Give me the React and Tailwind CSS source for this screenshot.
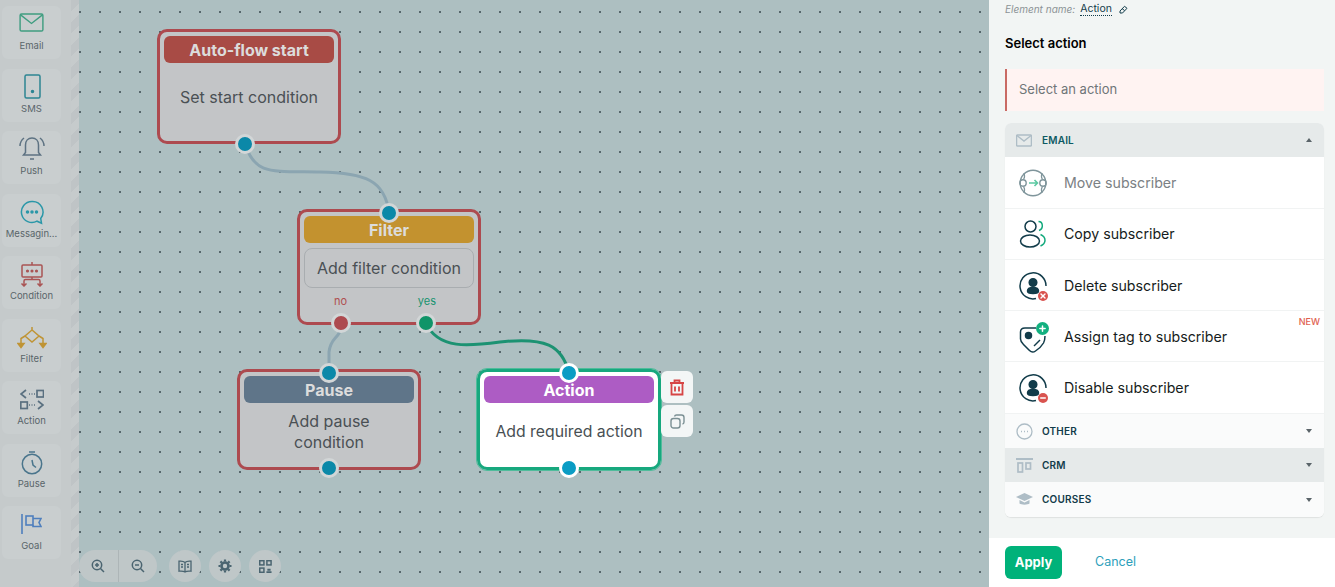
import React from "react";
import { Plus, Minus, X } from "lucide-react";

const FONT = "font-['Inter','Liberation_Sans',sans-serif]";

// Sidebar drawings, colours follow the dimmed palette
const EmailIcon = ({ c = "#3f9d80", w = 25, h = 19, sw = 1.5 }) => (
  <svg width={w} height={h} viewBox="0 0 26 20" fill="none" stroke={c} strokeWidth={sw}>
    <rect x="1" y="1" width="24" height="18" rx="1.5" />
    <path d="M1.5 2l11.5 9L24.5 2" />
  </svg>
);
const SmsIcon = () => (
  <svg width="18" height="25" viewBox="0 0 18 25" fill="none" stroke="#2c8593" strokeWidth="1.5">
    <rect x="2" y="1" width="15" height="23" rx="1.5" />
    <circle cx="9.5" cy="17.5" r="1" fill="#2c8593" />
  </svg>
);
const PushIcon = () => (
  <svg width="26" height="25" viewBox="0 0 26 25" fill="none" stroke="#5d7282" strokeWidth="1.5">
    <path d="M13 2c-4 0-6.500 3-6.500 7v7.500L4.500 19h17l-2-2.500V9c0-4-2.500-7-6.500-7z" />
    <path d="M11 23h4M5 2C2.500 4 1 7 1 10M21 2c2.500 2 4 5 4 8" />
  </svg>
);
const MessageIcon = () => (
  <svg width="24" height="25" viewBox="0 0 24 25" fill="none" stroke="#2a97a8" strokeWidth="1.500">
    <path d="M12 1.500a10.500 10.500 0 1 0 5 19.700l4.500 2-.8-4.700A10.500 10.500 0 0 0 12 1.500z" />
    <circle cx="7.500" cy="12" r="1" fill="#2a97a8" />
    <circle cx="12" cy="12" r="1" fill="#2a97a8" />
    <circle cx="16.500" cy="12" r="1" fill="#2a97a8" />
  </svg>
);
const ConditionIcon = () => (
  <svg width="24" height="25" viewBox="0 0 24 25" fill="none" stroke="#a95454" strokeWidth="1.500">
    <path d="M12 0v3" />
    <rect x="2" y="3" width="20" height="12" rx="1" />
    <circle cx="7.500" cy="9" r=".8" fill="#a95454" />
    <circle cx="12" cy="9" r=".8" fill="#a95454" />
    <circle cx="16.500" cy="9" r=".8" fill="#a95454" />
    <path d="M12 15v3M4 24v-5c0-1 .5-1.500 1.500-1.500h13c1 0 1.500.5 1.500 1.500v5M1.500 21.500L4 24l2.500-2.500M17.500 21.500L20 24l2.500-2.500" />
  </svg>
);
const FilterIcon = () => (
  <svg width="30" height="22" viewBox="0 0 30 22" fill="none" stroke="#bf9435" strokeWidth="1.500">
    <path d="M15 0v3M15 3l-7 6 7 6 7-6zM8 9L4 11.500V19M22 9l4 2.500V19" />
    <path d="M1 16.500h6L4 20.500zM23 16.500h6l-3 4z" fill="#bf9435" />
  </svg>
);
const ActionIcon = () => (
  <svg width="24" height="22" viewBox="0 0 24 22" fill="none" stroke="#5a7080" strokeWidth="1.700">
    <path d="M6 1L1 5l5 4" />
    <path d="M9 5h1M11.500 5h1M14 5h1" />
    <rect x="17" y="1.500" width="6.500" height="6.500" />
    <rect x=".8" y="13" width="6.500" height="6.500" />
    <path d="M9 16h1M11.500 16h1M14 16h1M18 12l5 4-5 4" />
  </svg>
);
const PauseIcon = () => (
  <svg width="22" height="24" viewBox="0 0 22 24" fill="none" stroke="#4a758c" strokeWidth="1.500">
    <path d="M8 1h6" />
    <circle cx="11" cy="13" r="9.700" />
    <path d="M11 9l1 5 3 2.500" />
  </svg>
);
const GoalIcon = () => (
  <svg width="21" height="21" viewBox="0 0 21 21" fill="none" stroke="#4f7fbd" strokeWidth="1.600">
    <path d="M1 0v20" />
    <rect x="5" y="2" width="7" height="9" />
    <path d="M12 4.500h8l-2 4 2 4h-8V11" />
  </svg>
);

const tools = [
  ["Email", <EmailIcon />, "pt-[4px]", "mt-[5px]"],
  ["SMS", <SmsIcon />, "pt-[5.5px]", "mt-[3.5px]"],
  ["Push", <PushIcon />, "pt-[4.5px]", "mt-[4.5px]"],
  ["Messagin...", <MessageIcon />, "pt-[6.5px]", "mt-[2.5px]"],
  ["Condition", <ConditionIcon />, "pt-[6px]", "mt-[3px]"],
  ["Filter", <FilterIcon />, "pt-[7px]", "mt-[2px]"],
  ["Action", <ActionIcon />, "pt-[6px]", "mt-[3px]"],
  ["Pause", <PauseIcon />, "pt-[6.5px]", "mt-[2.5px]"],
  ["Goal", <GoalIcon />, "pt-[6px]", "mt-[3px]"],
];

const ToolButton = ({ tool }) => (
  <div className={`w-[59px] h-[53px] ml-[2px] rounded-md bg-[#c9cecf] flex flex-col items-center ${tool[2]}`}>
    <div className="h-[25px] flex items-center">{tool[1]}</div>
    <span className={`text-[9.5px] leading-3 text-[#59656a] ${tool[3]}`}>{tool[0]}</span>
  </div>
);

const Port = ({ x, y, color = "bg-[#0b88a8]", ring = "border-[#d2d6d7]" }) => (
  <span
    className={`absolute size-[20px] rounded-full border-[3.5px] -translate-x-1/2 -translate-y-1/2 ${color} ${ring}`}
    style={{ left: x - 79, top: y }}
  />
);

const Node = ({ title, header, className, border = "border-[#ad4a4f]", bg = "bg-[#c3c5c7]", titleColor = "text-[#dcdcdc]", children }) => (
  <div className={`absolute w-[184px] rounded-[10px] border-[3px] p-1 ${border} ${bg} ${className}`}>
    <div className={`h-[27px] rounded-md flex items-center justify-center text-[16px] font-bold ${header} ${titleColor}`}>
      {title}
    </div>
    {children}
  </div>
);

const RoundBtn = ({ children }) => (
  <div className="size-8 rounded-full bg-[#bfc7c8] flex items-center justify-center">{children}</div>
);

const ZoomGlyph = ({ plus }) => (
  <svg width="14" height="14" viewBox="0 0 14 14" fill="none" stroke="#4a6470" strokeWidth="1.500">
    <circle cx="6" cy="6" r="4.700" />
    <path d="M9.500 9.500L13 13" />
    <path d={plus ? "M4 6h4M6 4v4" : "M4 6h4"} />
  </svg>
);

const Canvas = () => (
  <div className="relative flex-1 bg-[#adbfc1] bg-[radial-gradient(circle,#56666b_0.8px,transparent_1.200px)] bg-[length:20px_20px] bg-[position:-9px_2px]">
    <svg className="absolute inset-0" width="910" height="587" viewBox="79 0 910 587" fill="none" strokeWidth="3">
      <path d="M245 144C255 175 270 171 320 172C365 173 385 180 389 213" stroke="#8ba5b1" />
      <path d="M341 323C341 340 331 335 329 352L329 373" stroke="#8ba5b1" />
      <path d="M426 323C438 350 470 346 500 342C545 337 562 345 569 373" stroke="#1c9272" />
    </svg>

    <Node title="Auto-flow start" header="bg-[#a84b45]" className="left-[78px] top-[29px] h-[115px]">
      <p className="mt-[22px] text-center text-[16px] leading-6 text-[#4a5054]">Set start condition</p>
    </Node>

    <Node title="Filter" header="bg-[#c3922f]" className="left-[218px] top-[209px] h-[116px]">
      <div className="mt-[5px] h-10 pb-[1px] rounded-lg border border-[#a9adb0] flex items-center justify-center text-[16px] text-[#4a5054]">
        Add filter condition
      </div>
      <div className="mt-[5px] flex justify-between pl-[30px] pr-[38px] text-[11px] leading-4">
        <span className="text-[#b04f50]">no</span>
        <span className="text-[#17936f]">yes</span>
      </div>
    </Node>

    <Node title="Pause" header="bg-[#5f7589]" className="left-[158px] top-[369px] h-[101px]">
      <p className="mt-[8px] text-center text-[16px] leading-[21px] text-[#4a5054]">
        Add pause
        <br />
        condition
      </p>
    </Node>

    <Node
      title="Action"
      header="bg-[#ad5cc4]"
      titleColor="text-white"
      border="border-[#17a87e]"
      bg="bg-white"
      className="left-[398px] top-[369px] h-[101px] outline-[1.5px] outline-[#4fbc9b]"
    >
      <p className="mt-[17px] text-center text-[15.8px] leading-6 text-[#484f53]">Add required action</p>
    </Node>

    {/* node actions */}
    <div className="absolute left-[582px] top-[371px] flex flex-col gap-[2px]">
      <div className="size-8 rounded-md bg-[#f3f6f6] flex items-center justify-center">
        <svg width="16" height="17" viewBox="0 0 16 17" fill="none" stroke="#d64545" strokeWidth="1.800">
          <path d="M1 4h14M5.500 4V1.500h5V4M2.500 4v11.500h11V4M6 7.500v5M10 7.500v5" />
        </svg>
      </div>
      <div className="size-8 rounded-md bg-[#f3f6f6] flex items-center justify-center">
        <svg width="15" height="15" viewBox="0 0 15 15" fill="none" stroke="#7b9094" strokeWidth="1.400">
          <rect x="1" y="4.500" width="9" height="9.500" rx="2.500" />
          <path d="M4.500 2.500c.3-1 1-1.500 2-1.500h5c1.500 0 2.500 1 2.500 2.500v4.500c0 1-.5 1.800-1.500 2" />
        </svg>
      </div>
    </div>

    <Port x={245} y={144} />
    <Port x={389} y={213} />
    <Port x={341} y={323} color="bg-[#ad4a4f]" />
    <Port x={426} y={323} color="bg-[#0f9468]" />
    <Port x={329} y={373} />
    <Port x={329} y={468} />
    <Port x={569} y={373} color="bg-[#0a9cc4]" ring="border-white" />
    <Port x={569} y={468} color="bg-[#0a9cc4]" ring="border-white" />

    {/* bottom toolbar */}
    <div className="absolute left-0 bottom-[5px] flex items-center gap-3">
      <div className="flex h-8 w-[78px] rounded-full bg-[#bfc7c8]">
        <div className="flex-1 flex items-center justify-center border-r border-[#adb5b7]"><ZoomGlyph plus /></div>
        <div className="flex-1 flex items-center justify-center"><ZoomGlyph /></div>
      </div>
      <div className="flex gap-2">
        <RoundBtn>
          <svg width="14" height="13" viewBox="0 0 14 13" fill="none" stroke="#4a6470" strokeWidth="1.300">
            <path d="M7 2.500C5.500 1 3 1 1 1.200v10C3 11 5.500 11 7 12c1.500-1 4-1 6-.8v-10C11 1 8.500 1 7 2.500zM7 2.500V12M3 4.500h2M3 7h2M9 4.500h2M9 7h2" />
          </svg>
        </RoundBtn>
        <RoundBtn>
          <svg width="14" height="14" viewBox="0 0 14 14" fill="none" stroke="#4a6470">
            <circle cx="7" cy="7" r="3.500" strokeWidth="2.600" />
            <path d="M7 .5v2M7 11.500v2M.5 7h2M11.500 7h2M2.400 2.400l1.400 1.400M10.200 10.200l1.400 1.400M2.400 11.600l1.400-1.400M10.200 3.800l1.400-1.400" strokeWidth="2.200" />
          </svg>
        </RoundBtn>
        <RoundBtn>
          <svg width="13" height="13" viewBox="0 0 14 14" fill="none" stroke="#4a6470" strokeWidth="1.600">
            <rect x=".8" y=".8" width="4.500" height="4.500" />
            <rect x="8.500" y=".8" width="4.500" height="4.500" />
            <rect x=".8" y="8.700" width="4.500" height="4.500" />
            <path d="M8 13h5.500M9 10.500h3.500" strokeWidth="2" />
          </svg>
        </RoundBtn>
      </div>
    </div>
  </div>
);

const MoveIcon = () => (
  <svg width="28" height="28" viewBox="0 0 28 28" fill="none" stroke="#7f959b" strokeWidth="1.400">
    <circle cx="14" cy="14" r="12.800" />
    <path d="M5 4c1 4 1 5-.5 6M23 4c-1 4-1 5 .5 6M5 24c1-4 1-5-.5-6M23 24c-1-4-1-5 .5-6" />
    <circle cx="4" cy="14" r="3.200" />
    <circle cx="24" cy="14" r="3.200" />
    <path d="M10 14h8M15.500 11l3 3-3 3" stroke="#5cc9a2" strokeWidth="1.600" />
  </svg>
);
const CopyIcon = () => (
  <svg width="28" height="28" viewBox="0 0 28 28" fill="none" strokeWidth="1.500">
    <circle cx="11.500" cy="6.500" r="5.500" stroke="#123c4a" />
    <ellipse cx="11" cy="21" rx="9.500" ry="6" stroke="#123c4a" />
    <path d="M19.500 1.500c4.500 0 5.500 7 .5 9M21.500 14.500c6 2.500 6 9 0 11.500" stroke="#12a97c" />
  </svg>
);
const PersonIcon = ({ badge }) => (
  <div className="relative size-7">
    <svg width="28" height="28" viewBox="0 0 28 28" fill="none" stroke="#123c4a" strokeWidth="1.500">
      <path d="M17 26.500A13 13 0 1 1 27 14" />
      <circle cx="14" cy="10.500" r="3.800" fill="#123c4a" />
      <path d="M8.500 19c0-2.500 2-3.500 5.500-3.500s5.500 1 5.500 3.500-3 2.500-5.500 2.500-5.500 0-5.500-2.500z" fill="#123c4a" />
    </svg>
    <span className="absolute -right-[1px] -bottom-[1px] size-[10px] rounded-full bg-[#d9534f] flex items-center justify-center">
      {badge === "x" ? <X size={8} color="white" strokeWidth={4} /> : <Minus size={8} color="white" strokeWidth={4} />}
    </span>
  </div>
);
const TagIcon = () => (
  <div className="relative size-7">
    <svg width="28" height="30" viewBox="0 0 28 30" fill="none" stroke="#123c4a" strokeWidth="1.500">
      <path d="M17 5H6C3 5 1.500 7 1.500 9v7c0 2 1 3.500 3 5.500l6 6c2 2 4 2 6 .5 3-2 6-4.500 8-8 1-2 1.500-4 1.500-7" />
      <circle cx="9.500" cy="12.500" r="3" fill="#123c4a" />
      <path d="M15 23l6-6" />
    </svg>
    <span className="absolute -right-[2px] -top-[1px] size-[13px] rounded-full bg-[#12b07f] flex items-center justify-center">
      <Plus size={9} color="white" strokeWidth={4} />
    </span>
  </div>
);

const actions = [
  { label: "Move subscriber", icon: <MoveIcon />, text: "text-[#7b8184]", h: "h-[52px]" },
  { label: "Copy subscriber", icon: <CopyIcon />, text: "text-[#161c20]", h: "h-[51px]" },
  { label: "Delete subscriber", icon: <PersonIcon badge="x" />, text: "text-[#161c20]", h: "h-[51px] pt-[1px]" },
  { label: "Assign tag to subscriber", icon: <TagIcon />, text: "text-[#161c20]", h: "h-[51px] pt-[1px]", isNew: true },
  { label: "Disable subscriber", icon: <PersonIcon badge="minus" />, text: "text-[#161c20]", h: "h-[52px] pt-[1px]" },
];

const Caret = ({ up }) => (
  <span
    className={`ml-auto mr-[12px] w-0 h-0 border-x-[3.5px] border-x-transparent ${up ? "border-b-[4px] border-b-[#5a6469]" : "border-t-[4px] border-t-[#5a6469]"}`}
  />
);

const GroupHead = ({ label, icon, className, textColor = "text-[#123c4a]" }) => (
  <div className={`flex items-center pl-3 ${className}`}>
    <span className="w-[25px] flex justify-start -ml-[1px] mr-[1px]">{icon}</span>
    <span className={`text-[10px] font-semibold tracking-[0.2px] ${textColor}`}>{label}</span>
    <Caret up={label === "EMAIL"} />
  </div>
);

const Panel = () => (
  <aside className="w-[346px] h-full flex flex-col bg-[#f2f5f4]">
    <div className="flex-1 pl-4 pr-[11px]">
      <div className="h-[18px] flex items-center text-[10px]">
        <span className="italic text-[#8c9396]">Element name:</span>
        <span className="ml-[5px] text-[10.5px] text-[#123c4a] border-b border-dotted border-[#123c4a] leading-3">Action</span>
        <svg className="ml-[7px]" width="9" height="9" viewBox="0 0 9 9" fill="none" stroke="#123c4a" strokeWidth="1">
          <path d="M1 6l4.500-4.700 2.500 2L3.500 8H1zM3 3.500l2.500 2" />
        </svg>
      </div>
      <h3 className="mt-[17px] text-[13px] leading-4 font-semibold text-black">Select action</h3>
      <div className="mt-[18px] h-[42px] flex items-center pl-3 bg-[#fff3f2] border-l-2 border-[#c96a64] text-[13px] text-[#6f7578]">
        Select an action
      </div>
      <div className="mt-3 rounded-md overflow-hidden bg-white shadow-[0_1px_1px_rgba(0,0,0,0.08)]">
        <GroupHead label="EMAIL" icon={<EmailIcon c="#aebdc6" w={16} h={13} sw={2.200} />} className="h-[34px] bg-[#e6eaea]" textColor="text-[#0d5a63]" />
        {actions.map((a) => (
          <div key={a.label} className={`relative flex items-center pl-[14px] border-b border-[#f1f3f3] last:border-b-0 ${a.h}`}>
            <span className="w-[28px] flex justify-center">{a.icon}</span>
            <span className={`ml-[17px] text-[14.2px] ${a.text}`}>{a.label}</span>
            {a.isNew && <span className="absolute right-[4px] top-[4px] text-[9px] font-medium text-[#e0604f]">NEW</span>}
          </div>
        ))}
        <GroupHead
          label="OTHER"
          icon={
            <svg width="17" height="17" viewBox="0 0 17 17" fill="none" stroke="#aebdc6" strokeWidth="1.300">
              <circle cx="8.500" cy="8.500" r="7.500" />
              <path d="M5 8.500h1M8 8.500h1M11 8.500h1" strokeWidth="1.500" />
            </svg>
          }
          className="h-[34px] bg-[#fafbfb]"
        />
        <GroupHead
          label="CRM"
          icon={
            <svg width="17" height="15" viewBox="0 0 17 15" fill="none" stroke="#aebdc6" strokeWidth="1.700">
              <path d="M0 1h17" strokeWidth="2" />
              <rect x="2" y="5" width="4.500" height="9" />
              <rect x="10" y="5" width="4.500" height="6" />
            </svg>
          }
          className="h-[34px] bg-[#e6eaea]"
        />
        <GroupHead
          label="COURSES"
          icon={
            <svg width="17" height="13" viewBox="0 0 17 13" fill="#aebdc6">
              <path d="M8.500 0L17 4l-8.500 4L0 4z" />
              <path d="M3.500 7v3.500c1.500 1.500 8.500 1.500 10 0V7l-5 2.500z" />
            </svg>
          }
          className="h-[35px] bg-[#fafbfb]"
        />
      </div>
    </div>
    <div className="h-[49px] bg-white flex items-start pl-4">
      <button className="mt-2 w-[57px] h-[33px] rounded-md bg-[#00b27a] text-white text-[13px] font-bold">Apply</button>
      <button className="mt-2 ml-[33px] h-[33px] text-[12.500px] text-[#2ca0bb]">Cancel</button>
    </div>
  </aside>
);

export default function App() {
  return (
    <div className={`flex w-[1335px] h-[587px] overflow-hidden ${FONT}`}>
      <nav className="w-[71px] bg-[#c5cacb] flex flex-col gap-[9.500px] pt-[6px]">
        {tools.map((t) => (
          <ToolButton key={t[0]} tool={t} />
        ))}
      </nav>
      <div className="w-2 bg-[repeating-linear-gradient(135deg,#bfc4c6_0_8px,#c6cbcc_8px_16px)]" />
      <Canvas />
      <Panel />
    </div>
  );
}
